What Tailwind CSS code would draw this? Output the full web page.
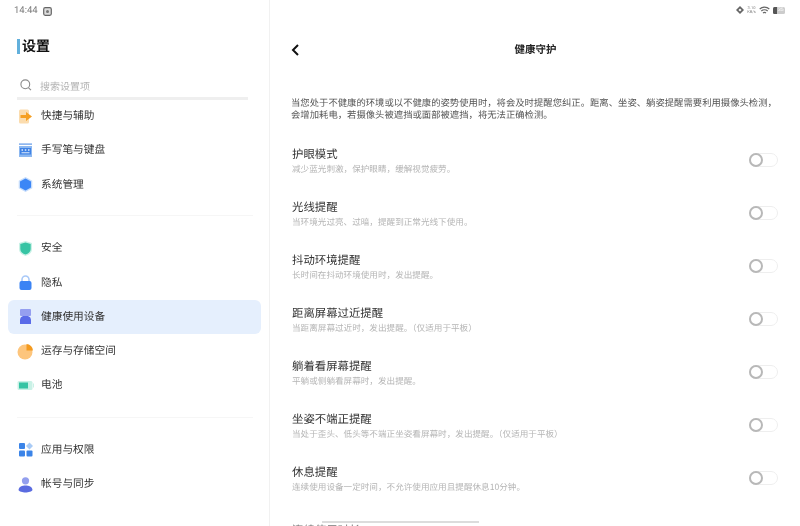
<!DOCTYPE html>
<html lang="zh">
<head>
    <meta charset="UTF-8">
    <title>设置</title>
    <script src="https://cdn.jsdelivr.net/npm/@tailwindcss/browser@4"></script>
</head>
<body class="bg-white overflow-hidden font-['Noto_Sans_CJK_SC','Noto_Sans',sans-serif] [text-rendering:geometricPrecision]">
<div class="flex w-[800px] h-[526px] overflow-hidden blur-[0.35px]">
    <!-- sidebar -->
    <aside class="w-[270px] shrink-0 border-r border-[#f1f1f1] flex flex-col">
        <div class="h-[20px] mt-[1px] shrink-0 pl-[14px] flex items-center gap-[5px] text-[9.5px] text-[#777] font-['Roboto']">
            <span>14:44</span>
            <svg width="9" height="9" viewBox="0 0 9 9"><rect x="0.7" y="0.7" width="7.6" height="7.6" rx="1.5" fill="#ddd" stroke="#666" stroke-width="1.2"/><circle cx="4.5" cy="4.5" r="1.5" fill="#777"/></svg>
        </div>
        <div class="mt-[15px] pl-[17px] h-[20px] shrink-0 flex items-center gap-[2px]">
            <span class="w-[3px] h-[15px] bg-[#62b0dc]"></span>
            <h1 class="text-[14px] leading-[20px] font-bold text-[#111]">设置</h1>
        </div>
        <div class="mt-[23px] ml-[20px] flex items-center gap-[8px] h-[12px] shrink-0">
            <svg width="12" height="12" viewBox="0 0 12 12" fill="none" stroke="#8a8a8a" stroke-width="1.1"><circle cx="5.3" cy="5.3" r="4.4"/><path d="M8.6 8.8L11 11.2"/></svg>
            <span class="text-[10px] text-[#b4b4b4]">搜索设置项</span>
        </div>
        <div class="mt-[6px] ml-[17px] w-[231px] h-[3px] shrink-0 bg-[#efefef]"></div>

        <nav class="mt-[-1px] text-[10.7px] text-[#333]">
            <div class="h-[34.3px] pl-[18px] flex items-center gap-[8px]">
                <svg class="w-[15px] h-[15px]" viewBox="0 0 15 15"><rect x="1" y="0.5" width="10" height="14" rx="1.5" fill="#fbdcae"/><path d="M2.5 6H8V3l6 4.5L8 12V9H2.5z" fill="#f59f22"/></svg>
                <span>快捷与辅助</span>
            </div>
            <div class="h-[34.3px] pl-[18px] flex items-center gap-[8px]">
                <svg class="w-[15px] h-[15px]" viewBox="0 0 15 15"><rect x="1" y="0.5" width="13" height="1.2" fill="#5f98e8"/><rect x="1" y="3" width="13" height="11" fill="#8db8f0"/><rect x="2" y="5" width="11" height="6.5" fill="#3f83e6"/><path d="M3.5 6.3h1.5v1.5H3.5zM6.8 6.3h1.500v1.500H6.800zM10 6.300h1.500v1.500H10zM3.500 9.200h8v1h-8z" fill="#dfeafa"/></svg>
                <span>手写笔与键盘</span>
            </div>
            <div class="h-[34.3px] pl-[18px] flex items-center gap-[8px]">
                <svg class="w-[15px] h-[15px]" viewBox="0 0 15 15"><path d="M7.5 0L14.3 3.7V11.3L7.5 15L.7 11.3V3.7z" fill="#c5dcfb"/><path d="M7.5 1.5L13 4.5V10.5L7.5 13.5L2 10.5V4.5z" fill="#3b86f6"/></svg>
                <span>系统管理</span>
            </div>

            <div class="mt-[13px] mb-[15.2px] ml-[17px] w-[236px] h-px bg-[#f6f6f6]"></div>

            <div class="h-[34.3px] pl-[18px] flex items-center gap-[8px]">
                <svg class="w-[15px] h-[15px]" viewBox="0 0 15 15"><path d="M7.5 0L14 2V8C14 11.5 11 14 7.5 15C4 14 1 11.5 1 8V2z" fill="#c9f1e6"/><path d="M7.5 1.5L12.7 3V8C12.7 10.7 10.3 12.7 7.5 13.5C4.7 12.7 2.3 10.7 2.3 8V3z" fill="#37c4a4"/></svg>
                <span>安全</span>
            </div>
            <div class="h-[34.3px] pl-[18px] flex items-center gap-[8px]">
                <svg class="w-[15px] h-[15px]" viewBox="0 0 15 15"><path d="M4 7V4.5a3.5 3.5 0 0 1 7 0V7" fill="none" stroke="#a9c9f8" stroke-width="1.6"/><rect x="1.5" y="6" width="12" height="9" rx="2" fill="#3a83f4"/></svg>
                <span>隐私</span>
            </div>
            <div class="mx-[8px] h-[34.3px] pl-[10px] flex items-center gap-[8px] bg-[#e5effd] rounded-[6px]">
                <svg class="w-[15px] h-[15px]" viewBox="0 0 15 15"><rect x="2" y="0" width="11" height="7" rx="1" fill="#959ff0"/><path d="M2 15V10.500a4 4 0 0 1 3-3.500h5a4 4 0 0 1 3 3.500V15z" fill="#5a6be8"/></svg>
                <span>健康使用设备</span>
            </div>
            <div class="h-[34.3px] pl-[18px] flex items-center gap-[8px]">
                <svg class="w-[15px] h-[15px] overflow-visible" viewBox="0 0 15 15"><circle cx="7" cy="8" r="7.5" fill="#fdc57c"/><path d="M8.5 0A7 7 0 0 1 15 6.5H8.5z" fill="#f49a1e"/></svg>
                <span>运存与存储空间</span>
            </div>
            <div class="h-[34.3px] pl-[18px] flex items-center gap-[8px]">
                <svg class="w-[15px] h-[15px] overflow-visible" viewBox="0 0 15 15"><rect x="-0.5" y="3" width="15" height="9" rx="1.5" fill="#c9f1e6"/><rect x="15" y="5.5" width="1" height="4" fill="#c9f1e6"/><rect x="1" y="4.5" width="9" height="6" fill="#37c4a4"/></svg>
                <span>电池</span>
            </div>

            <div class="mt-[14px] mb-[15px] ml-[17px] w-[236px] h-px bg-[#f6f6f6]"></div>

            <div class="h-[34.3px] pl-[18px] flex items-center gap-[8px]">
                <svg class="w-[15px] h-[15px]" viewBox="0 0 15 15"><rect x="1" y="1" width="6" height="6" rx="1" fill="#3b84e8"/><rect x="1" y="8.5" width="6" height="6" rx="1" fill="#3b84e8"/><rect x="8.5" y="8.5" width="6" height="6" rx="1" fill="#3b84e8"/><path d="M11.5 0.500L15 4L11.500 7.500L8 4z" fill="#a9cbf6"/></svg>
                <span>应用与权限</span>
            </div>
            <div class="h-[34.3px] pl-[18px] flex items-center gap-[8px]">
                <svg class="w-[15px] h-[15px] overflow-visible" viewBox="0 0 15 15"><circle cx="7.5" cy="3.8" r="3.6" fill="#939fee"/><path d="M0.500 13C1 9.500 4 8.500 7.500 8.500S14 9.500 14.500 13C14 14.500 10.500 15.500 7.500 15.500S1 14.500 0.500 13z" fill="#5a6be0"/></svg>
                <span>帐号与同步</span>
            </div>
        </nav>
    </aside>

    <!-- detail page -->
    <main class="relative flex-1 min-w-0 flex flex-col">
        <div class="h-[20px] shrink-0 pr-[15px] flex items-center justify-end gap-[2px]">
            <svg width="8" height="8" viewBox="0 0 8 8"><path d="M4 0L8 4L4 8L0 4z" fill="#666"/><circle cx="4" cy="4" r="1.3" fill="#eee"/></svg>
            <div class="w-[11px] text-[4px] leading-[4px] text-center text-[#888] font-['Roboto']">3.10<br>KB/s</div>
            <svg width="11" height="9" viewBox="0 0 11 9" fill="none" stroke="#666" stroke-width="1.2"><path d="M.7 3a7 7 0 0 1 9.600 0M2.300 5a4.700 4.700 0 0 1 6.400 0M4 7a2.300 2.300 0 0 1 3 0"/></svg>
            <div class="ml-[1px] w-[12px] h-[7px] rounded-[1.5px] bg-[#ccc] overflow-hidden flex items-center"><span class="w-[4px] h-full bg-[#555]"></span><span class="text-[5px] leading-[7px] text-white font-['Roboto'] pl-[1px]">35</span></div>
        </div>

        <header class="mt-[21px] h-[18px] shrink-0 relative flex items-center justify-center">
            <svg class="absolute left-[21px] top-[3px]" width="8" height="12" viewBox="0 0 8 12" fill="none" stroke="#111" stroke-width="2"><path d="M7 1L2 6L7 11"/></svg>
            <h2 class="text-[10.5px] font-bold text-[#222] ml-[1px]">健康守护</h2>
        </header>

        <p class="mt-[37px] ml-[21px] w-[490px] shrink-0 text-[9.35px] leading-[12px] text-[#555]">当您处于不健康的环境或以不健康的姿势使用时，将会及时提醒您纠正。距离、坐姿、躺姿提醒需要利用摄像头检测，会增加耗电，若摄像头被遮挡或面部被遮挡，将无法正确检测。</p>

        <ul class="mt-[15.5px] ml-[22px] mr-[22px] shrink-0">
            <li class="h-[52.9px] flex items-center justify-between">
                <div><div class="text-[11.4px] leading-[15px] text-[#333]">护眼模式</div><div class="text-[8.6px] leading-[14px] text-[#b5b5b5]">减少蓝光刺激，保护眼睛，缓解视觉疲劳。</div></div>
                <div class="mb-[3px] w-[29px] h-[14px] rounded-full border border-[#eee] flex"><span class="w-[14px] h-[14px] -m-px rounded-full border-2 border-[#b8b8b8] bg-white"></span></div>
            </li>
            <li class="h-[52.9px] flex items-center justify-between">
                <div><div class="text-[11.4px] leading-[15px] text-[#333]">光线提醒</div><div class="text-[8.6px] leading-[14px] text-[#b5b5b5]">当环境光过亮、过暗，提醒到正常光线下使用。</div></div>
                <div class="mb-[3px] w-[29px] h-[14px] rounded-full border border-[#eee] flex"><span class="w-[14px] h-[14px] -m-px rounded-full border-2 border-[#b8b8b8] bg-white"></span></div>
            </li>
            <li class="h-[52.9px] flex items-center justify-between">
                <div><div class="text-[11.4px] leading-[15px] text-[#333]">抖动环境提醒</div><div class="text-[8.6px] leading-[14px] text-[#b5b5b5]">长时间在抖动环境使用时，发出提醒。</div></div>
                <div class="mb-[3px] w-[29px] h-[14px] rounded-full border border-[#eee] flex"><span class="w-[14px] h-[14px] -m-px rounded-full border-2 border-[#b8b8b8] bg-white"></span></div>
            </li>
            <li class="h-[52.9px] flex items-center justify-between">
                <div><div class="text-[11.4px] leading-[15px] text-[#333]">距离屏幕过近提醒</div><div class="text-[8.6px] leading-[14px] text-[#b5b5b5]">当距离屏幕过近时，发出提醒。（仅适用于平板）</div></div>
                <div class="mb-[3px] w-[29px] h-[14px] rounded-full border border-[#eee] flex"><span class="w-[14px] h-[14px] -m-px rounded-full border-2 border-[#b8b8b8] bg-white"></span></div>
            </li>
            <li class="h-[52.9px] flex items-center justify-between">
                <div><div class="text-[11.4px] leading-[15px] text-[#333]">躺着看屏幕提醒</div><div class="text-[8.6px] leading-[14px] text-[#b5b5b5]">平躺或侧躺看屏幕时，发出提醒。</div></div>
                <div class="mb-[3px] w-[29px] h-[14px] rounded-full border border-[#eee] flex"><span class="w-[14px] h-[14px] -m-px rounded-full border-2 border-[#b8b8b8] bg-white"></span></div>
            </li>
            <li class="h-[52.9px] flex items-center justify-between">
                <div><div class="text-[11.4px] leading-[15px] text-[#333]">坐姿不端正提醒</div><div class="text-[8.6px] leading-[14px] text-[#b5b5b5]">当处于歪头、低头等不端正坐姿看屏幕时，发出提醒。（仅适用于平板）</div></div>
                <div class="mb-[3px] w-[29px] h-[14px] rounded-full border border-[#eee] flex"><span class="w-[14px] h-[14px] -m-px rounded-full border-2 border-[#b8b8b8] bg-white"></span></div>
            </li>
            <li class="h-[52.9px] flex items-center justify-between">
                <div><div class="text-[11.4px] leading-[15px] text-[#333]">休息提醒</div><div class="text-[8.6px] leading-[14px] text-[#b5b5b5]">连续使用设备一定时间，不允许使用应用且提醒休息10分钟。</div></div>
                <div class="mb-[3px] w-[29px] h-[14px] rounded-full border border-[#eee] flex"><span class="w-[14px] h-[14px] -m-px rounded-full border-2 border-[#b8b8b8] bg-white"></span></div>
            </li>
            <li class="h-[52.9px] pb-[4px] flex items-center justify-between">
                <div class="text-[11.4px] leading-[15px] text-[#777]">连续使用时长</div>
            </li>
        </ul>

        <!-- home indicator over the cut-off row -->
        <div class="absolute left-[52px] top-[521px] w-[157px] h-[2px] bg-[#dcdcdc]"></div>
    </main>
</div>
</body>
</html>
